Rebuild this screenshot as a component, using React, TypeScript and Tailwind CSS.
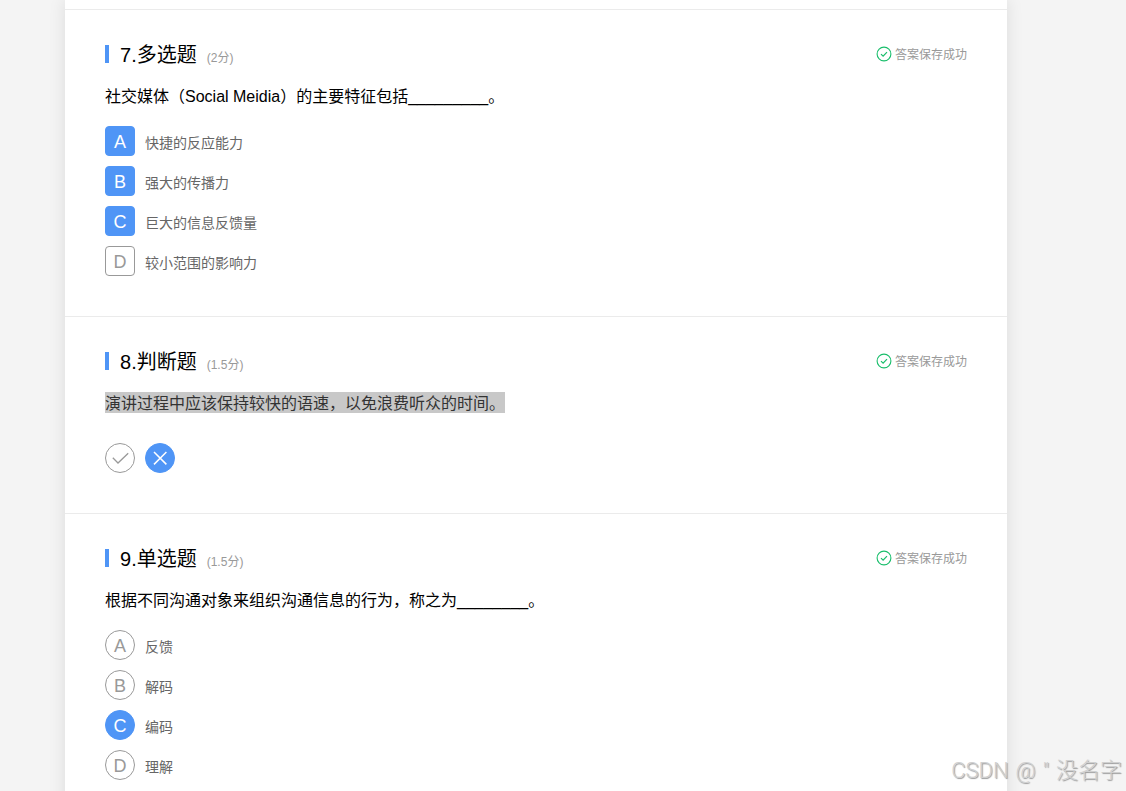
import React from 'react';
import { clsx } from 'clsx';

type QuestionType = 'multiple' | 'judge' | 'single';

interface Option {
  key: string;
  text?: string;
  selected?: boolean;
}

interface Question {
  no: number;
  type: QuestionType;
  score: string;
  stem: string;
  highlighted?: boolean;
  options: Option[];
}

const TYPE_LABELS: Record<QuestionType, string> = {
  multiple: '多选题',
  judge: '判断题',
  single: '单选题',
};

const QUESTIONS: Question[] = [
  {
    no: 7,
    type: 'multiple',
    score: '2',
    stem: '社交媒体（Social Meidia）的主要特征包括_________。',
    options: [
      { key: 'A', text: '快捷的反应能力', selected: true },
      { key: 'B', text: '强大的传播力', selected: true },
      { key: 'C', text: '巨大的信息反馈量', selected: true },
      { key: 'D', text: '较小范围的影响力' },
    ],
  },
  {
    no: 8,
    type: 'judge',
    score: '1.5',
    stem: '演讲过程中应该保持较快的语速，以免浪费听众的时间。',
    highlighted: true,
    options: [{ key: 'right' }, { key: 'wrong', selected: true }],
  },
  {
    no: 9,
    type: 'single',
    score: '1.5',
    stem: '根据不同沟通对象来组织沟通信息的行为，称之为________。',
    options: [
      { key: 'A', text: '反馈' },
      { key: 'B', text: '解码' },
      { key: 'C', text: '编码', selected: true },
      { key: 'D', text: '理解' },
    ],
  },
];

const SavedIcon: React.FC = () => (
  <svg className="h-4 w-4" viewBox="0 0 16 16" fill="none" stroke="#19be6b" aria-hidden="true">
    <circle cx="8" cy="8" r="6.9" strokeWidth="1.1" />
    <path d="M5 8.1l2.1 2.1 3.9-4.1" strokeWidth="1.2" />
  </svg>
);

const JudgeIcon: React.FC<{ name: string }> = ({ name }) => (
  <svg className="h-7 w-7" viewBox="0 0 28 28" fill="none" stroke="currentColor" aria-hidden="true">
    {name === 'right' ? (
      <path d="M6.8 13.8l5.2 5.2 10.2-9.8" strokeWidth="1.3" />
    ) : (
      <path d="M8 8l12.4 12.4M20.4 8L8 20.4" strokeWidth="1.5" />
    )}
  </svg>
);

const OptionItem: React.FC<{ question: Question; option: Option }> = ({ question, option }) => {
  const multiple = question.type === 'multiple';
  const judge = question.type === 'judge';
  return (
    <label className="flex cursor-pointer items-end gap-[10px]">
      <input
        type={multiple ? 'checkbox' : 'radio'}
        name={`question-${question.no}`}
        defaultChecked={option.selected}
        aria-label={option.text ?? (option.key === 'right' ? '正确' : '错误')}
        className="peer sr-only"
      />
      <span
        className={clsx(
          'flex h-[30px] w-[30px] shrink-0 items-center justify-center border border-[#999] text-lg text-[#999]',
          'peer-checked:border-[#4f95f6] peer-checked:bg-[#4f95f6] peer-checked:text-white',
          multiple ? 'rounded' : 'rounded-full',
          !judge && 'pt-0.5'
        )}
      >
        {judge ? <JudgeIcon name={option.key} /> : option.key}
      </span>
      {option.text && <span className="text-sm leading-[26px] text-[#666]">{option.text}</span>}
    </label>
  );
};

const QuestionCard: React.FC<{ question: Question }> = ({ question }) => {
  const judge = question.type === 'judge';
  return (
    <section className="border-t border-[#ebebeb] px-10 pt-[30px] pb-10">
      <div className="flex h-7 items-center justify-between">
        <div className="flex items-center">
          <span className="h-[18px] w-1 bg-[#4f95f6]" />
          <div className="ml-[11px] flex items-baseline gap-[10px] pt-0.5">
            <h2 className="text-xl leading-[30px] text-black">
              {question.no}.{TYPE_LABELS[question.type]}
            </h2>
            <span className="text-xs text-[#999]">({question.score}分)</span>
          </div>
        </div>
        <div className="flex items-center gap-[3px] text-xs text-[#999]">
          <SavedIcon />
          <span className="pt-0.5">答案保存成功</span>
        </div>
      </div>

      <p className="mt-[17px] flex h-6 items-start text-base leading-6 text-black">
        {question.highlighted ? (
          <mark className="h-[21px] bg-[#c8c8c8] text-[#333]">{question.stem}</mark>
        ) : (
          question.stem
        )}
      </p>

      <div className={clsx('flex gap-[10px]', judge ? 'mt-[27px]' : 'mt-[17px] flex-col items-start')}>
        {question.options.map((option) => (
          <OptionItem key={option.key} question={question} option={option} />
        ))}
      </div>
    </section>
  );
};

const App: React.FC = () => {
  return (
    <div className="relative h-screen overflow-hidden bg-[#f4f4f4] pr-[119px] pl-[65px] font-['Liberation_Sans','Noto_Sans_CJK_SC',sans-serif]">
      <main className="min-h-full bg-white pt-[9px] shadow-[0_0_16px_rgba(0,0,0,0.1)]">
        {QUESTIONS.map((question) => (
          <QuestionCard key={question.no} question={question} />
        ))}
      </main>

      {/* Watermark */}
      <div className="pointer-events-none absolute right-1 bottom-1 flex gap-[7px] font-[Roboto,'Noto_Sans_CJK_SC',sans-serif] text-[22px] leading-8 font-light text-[#d0d0d0] [text-shadow:1px_1px_1px_#999]">
        <span>CSDN</span>
        <span>@</span>
        <span>"</span>
        <span>没名字</span>
      </div>
    </div>
  );
};

export default App;
